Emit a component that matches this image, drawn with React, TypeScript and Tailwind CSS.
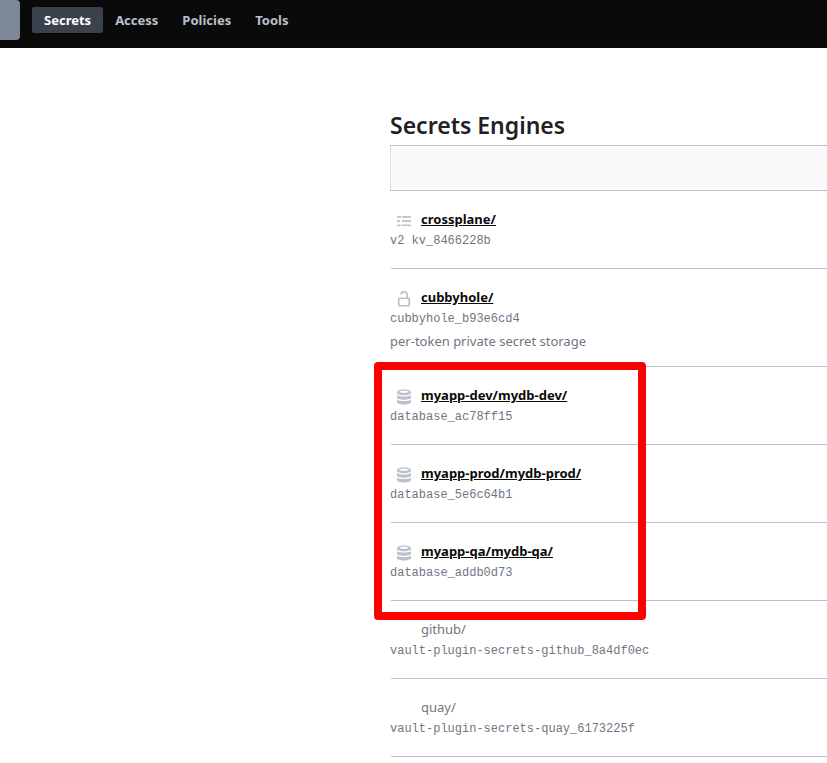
import React from "react";

type Engine = {
  path: string;
  accessor: string;
  icon?: "list" | "lock" | "database";
  description?: string;
};

const general: Engine[] = [
  { path: "crossplane/", accessor: "v2 kv_8466228b", icon: "list" },
  {
    path: "cubbyhole/",
    accessor: "cubbyhole_b93e6cd4",
    icon: "lock",
    description: "per-token private secret storage",
  },
];

const databases: Engine[] = [
  { path: "myapp-dev/mydb-dev/", accessor: "database_ac78ff15", icon: "database" },
  { path: "myapp-prod/mydb-prod/", accessor: "database_5e6c64b1", icon: "database" },
  { path: "myapp-qa/mydb-qa/", accessor: "database_addb0d73", icon: "database" },
];

const plugins: Engine[] = [
  { path: "github/", accessor: "vault-plugin-secrets-github_8a4df0ec" },
  { path: "quay/", accessor: "vault-plugin-secrets-quay_6173225f" },
];

function EngineIcon({ name }: { name: Engine["icon"] }) {
  if (name === "list") {
    return (
      <svg viewBox="0 0 16 16" className="size-4" fill="#bac1cc" aria-hidden="true">
        <path d="M1 3h4v1.700H1zM6 3h9v1.700H6zM1 7.200h3v1.700H1zM6 7.200h9v1.700H6zM1 11.400h4v1.700H1zM6 11.400h9v1.700H6z" />
      </svg>
    );
  }
  if (name === "lock") {
    return (
      <svg viewBox="0 0 16 16" className="size-4" fill="none" stroke="#bac1cc" strokeWidth="1.7" aria-hidden="true">
        <rect x="2.75" y="7.25" width="10.5" height="7.5" rx="0.5" />
        <path d="M5 3.5C5.3 1.7 6.4.9 8 .9c2 0 3.2 1.2 3.2 3v3.3" />
      </svg>
    );
  }
  if (name === "database") {
    return (
      <svg viewBox="0 0 16 16" className="size-4" fill="#bac1cc" aria-hidden="true">
        <path
          fillRule="evenodd"
          d="M1 3C1 1.400 4 .5 8 .5s7 .9 7 2.500v1C15 5.400 12 6.200 8 6.200S1 5.400 1 4zM3 2.800C3.600 3.500 5.500 3.900 8 3.900s4.400-.4 5-1.100C12.300 2.100 10.400 1.700 8 1.700s-4.300.4-5 1.100z"
        />
        <path d="M1 6c1.400 1 4 1.500 7 1.500S13.600 7 15 6v2.500c0 1.300-3 2.200-7 2.200s-7-.9-7-2.200z" />
        <path d="M1 10.500C2.400 11.500 5 12 8 12s5.600-.5 7-1.500V13c0 1.500-3 2.500-7 2.500S1 14.500 1 13z" />
      </svg>
    );
  }
  return null;
}

function EngineRow({ engine }: { engine: Engine }) {
  return (
    <li className="ml-px border-b border-[#bac1cc] pt-[17px] pb-[15px]">
      <div className="-ml-px">
        <div className="flex items-center text-[13px] leading-[22px]">
          <span className="mr-2 ml-1.5 flex w-[17px] shrink-0 pt-1">
            <EngineIcon name={engine.icon} />
          </span>
          {engine.icon ? (
            <a href="#" className="font-bold text-[#0a0a0a] underline">
              {engine.path}
            </a>
          ) : (
            <span>{engine.path}</span>
          )}
        </div>
        <code className="block font-['Liberation_Mono',monospace] text-xs leading-[23px]">{engine.accessor}</code>
        {engine.description && <p className="text-[13px] leading-5">{engine.description}</p>}
      </div>
    </li>
  );
}

function EngineList({ engines }: { engines: Engine[] }) {
  return (
    <ul>
      {engines.map((engine) => (
        <EngineRow key={engine.path} engine={engine} />
      ))}
    </ul>
  );
}

const tabs = ["Access", "Policies", "Tools"];

export default function App() {
  return (
    <div className="min-h-screen overflow-x-hidden bg-white font-['Noto_Sans',sans-serif] text-[#6f7682]">
      <header className="flex h-12 items-start bg-[#0a0a0a]">
        <div className="h-10 w-5 rounded-r bg-[#7c8797]" />
        <nav className="mt-[7px] ml-3 flex text-[13px] leading-[26px] font-bold text-[#bac1cc]">
          <a href="#" className="rounded-xs bg-[#3b424c] px-3 text-white">
            Secrets
          </a>
          {tabs.map((tab) => (
            <a key={tab} href="#" className="px-3">
              {tab}
            </a>
          ))}
        </nav>
      </header>
      <main className="ml-[390px] pt-[57px]">
        <h1 className="text-[23px] leading-10 font-semibold text-[#1f2124]">Secrets Engines</h1>
        <div className="h-[46px] border-y border-l border-y-[#bac1cc] border-l-[#dce0e6] bg-[#fafafa]" />
        <EngineList engines={general} />
        <div className="relative">
          <EngineList engines={databases} />
          <div className="pointer-events-none absolute -top-[5px] -bottom-[19px] -left-4 w-[272px] rounded border-8 border-[#ff0000]" />
        </div>
        <EngineList engines={plugins} />
      </main>
    </div>
  );
}
